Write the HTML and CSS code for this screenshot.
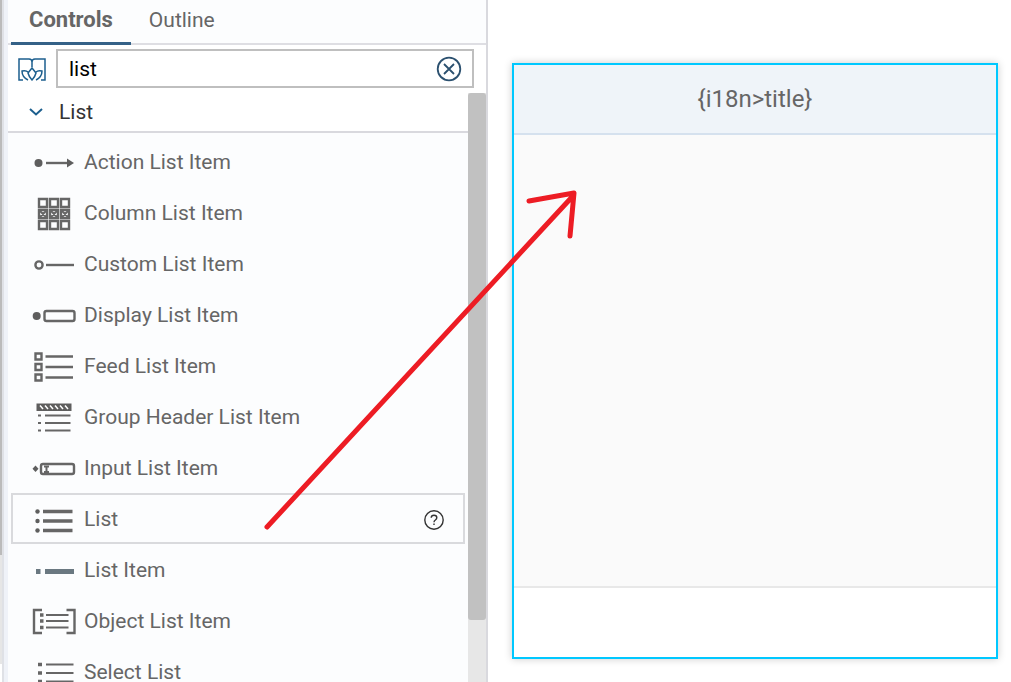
FILE: index.html
```html
<!DOCTYPE html>
<html lang="en">
<head>
    <meta charset="UTF-8">
    <meta name="viewport" content="width=device-width, initial-scale=1.0">
    <title>Layout Editor</title>
    <link rel="stylesheet" href="styles.css">
</head>
<body>
    <div class="gutter">
        <div class="gutter-thumb"></div>
        <div class="gutter-track"></div>
    </div>

    <aside class="panel">
        <nav class="tabs">
            <button class="tab active" type="button">Controls</button>
            <button class="tab" type="button">Outline</button>
        </nav>

        <div class="search">
            <button class="book-btn" type="button" aria-label="Library">
                <svg width="28" height="24" viewBox="0 0 28 24">
                    <path d="M5 23H1V2H11Q14 2 14 5V10M14 5Q14 2 17 2H27V23H23"/>
                    <path d="M14 11L10 16Q11 20 14 23Q17 20 18 16Z"/>
                    <path d="M10 15Q8 13 4 14Q4 20 10 23M18 15Q20 13 24 14Q24 20 18 23"/>
                </svg>
            </button>
            <div class="search-box">
                <input type="text" value="list" aria-label="Search controls">
                <button class="clear-btn" type="button" aria-label="Clear">
                    <svg width="26" height="26" viewBox="0 0 26 26">
                        <circle cx="13" cy="13" r="11.3"/>
                        <path d="M8 8L18 18M18 8L8 18"/>
                    </svg>
                </button>
            </div>
        </div>

        <div class="scroll-area">
            <div class="content">
                <button class="group" type="button">
                    <svg width="14" height="8" viewBox="0 0 14 8"><path d="M1 1L7 6.5L13 1"/></svg>
                    List
                </button>

                <ul class="items">
                    <li class="item">
                        <svg class="icon" viewBox="0 0 46 37">
                            <circle class="fill" cx="7.5" cy="20" r="4"/>
                            <path d="M15 20H37"/>
                            <path class="fill" d="M36 15.5L43 20L36 24.5Z"/>
                        </svg>
                        Action List Item
                    </li>
                    <li class="item">
                        <svg class="icon" viewBox="0 0 46 37">
                            <path d="M8 5H16V13H8ZM19 5H27V13H19ZM30 5H38V13H30ZM8 16H16V24H8ZM19 16H27V24H19ZM30 16H38V24H30ZM8 27H16V35H8ZM19 27H27V35H19ZM30 27H38V35H30Z"/>
                            <path class="medium" d="M9 17L15 23M15 17L9 23M20 17L26 23M26 17L20 23M31 17L37 23M37 17L31 23"/>
                        </svg>
                        Column List Item
                    </li>
                    <li class="item">
                        <svg class="icon" viewBox="0 0 46 37">
                            <circle cx="8" cy="20" r="3.6"/>
                            <path d="M15 20H43"/>
                        </svg>
                        Custom List Item
                    </li>
                    <li class="item">
                        <svg class="icon" viewBox="0 0 46 37">
                            <circle class="fill" cx="5.7" cy="20" r="4"/>
                            <rect x="13.5" y="15" width="30" height="10" rx="2"/>
                        </svg>
                        Display List Item
                    </li>
                    <li class="item">
                        <svg class="icon" viewBox="0 0 46 37">
                            <path d="M4.5 6.5H10.5V12.5H4.5ZM4.5 17H10.5V23H4.5ZM4.5 27.5H10.5V33.5H4.5Z"/>
                            <path d="M14.5 9.5H42M14.5 20H42M14.5 30.5H42"/>
                        </svg>
                        Feed List Item
                    </li>
                    <li class="item">
                        <svg class="icon" viewBox="0 0 46 37">
                            <rect class="fill" x="5.5" y="5.5" width="35" height="7.5"/>
                            <path class="hatch" d="M9 7.5L12 11M14 7.5L17 11M19 7.5L22 11M24 7.5L27 11M29 7.5L32 11M34 7.5L37 11"/>
                            <path class="medium" d="M14 17.5H39.5M14 25H39.5M14 32.5H39.5"/>
                            <path class="medium" d="M7 17.5H10M7 25H10M7 32.5H10"/>
                        </svg>
                        Group Header List Item
                    </li>
                    <li class="item">
                        <svg class="icon" viewBox="0 0 46 37">
                            <path class="fill" d="M1.5 19.7L4.5 16.5L7.5 19.7L4.5 23Z"/>
                            <rect x="10" y="15" width="33" height="10" rx="2"/>
                            <path class="medium" d="M13 17.5H18M15.5 17.5V23M13 23H18"/>
                        </svg>
                        Input List Item
                    </li>
                    <li class="item selected">
                        <svg class="icon" viewBox="0 0 46 37">
                            <path class="thick" d="M12 11.5H41.5M12 21H41.5M12 30.5H41.5"/>
                            <circle class="fill" cx="6.5" cy="11.5" r="2.2"/>
                            <circle class="fill" cx="6.5" cy="21" r="2.2"/>
                            <circle class="fill" cx="6.5" cy="30.5" r="2.2"/>
                        </svg>
                        List
                        <button class="help-btn" type="button" aria-label="Help">
                            <svg width="22" height="22" viewBox="0 0 22 22">
                                <circle cx="11" cy="12" r="9.2"/>
                                <path d="M8.2 9.8Q8.3 7.3 11 7.3Q13.8 7.3 13.8 9.8Q13.8 11 12.4 12Q11 13 11 14.2M11 15.6V17"/>
                            </svg>
                        </button>
                    </li>
                    <li class="item">
                        <svg class="icon" viewBox="0 0 46 37">
                            <path class="slate" d="M5 20.5H9.5M14 20.5H43"/>
                        </svg>
                        List Item
                    </li>
                    <li class="item">
                        <svg class="icon" viewBox="0 0 46 37">
                            <path d="M11 8H3V31H11M35.5 8H43.5V31H35.5"/>
                            <path class="medium" d="M15 13H37.5M15 19H37.5M15 25.5H37.5"/>
                            <path class="thick" d="M9 13H12.5M9 19H12.5M9 25.5H12.5"/>
                        </svg>
                        Object List Item
                    </li>
                    <li class="item">
                        <svg class="icon" viewBox="0 0 46 37">
                            <path class="medium" d="M15 11.5H42.5M15 20H42.5M15 28.5H42.5"/>
                            <path class="thick" d="M7 11.5H11M7 20H11M7 28.5H11"/>
                        </svg>
                        Select List
                    </li>
                </ul>
            </div>
            <div class="scrollbar"><div class="thumb"></div></div>
        </div>
    </aside>

    <main class="canvas">
        <section class="view">
            <header class="view-header">{i18n&gt;title}</header>
            <div class="view-body"></div>
            <footer class="view-footer"></footer>
        </section>
    </main>

    <!-- drag hint: from the List control to the view -->
    <svg class="arrow" width="330" height="350" viewBox="0 0 330 350">
        <path d="M7 342L312 12M269 16L314 8L310 51"/>
    </svg>
</body>
</html>
```

FILE: styles.css
```css
* {
    box-sizing: border-box;
}
body {
    display: flex;
    height: 100vh;
    margin: 0;
    overflow: hidden;
    background-color: #fff;
    color: #666;
    font-family: Roboto, "Noto Sans", sans-serif;
    font-size: 21px;
}
button, input {
    font: inherit;
    color: inherit;
    border: none;
    background: none;
    padding: 0;
    margin: 0;
}
button {
    cursor: pointer;
}
svg {
    display: block;
    flex: none;
    fill: none;
}

/* left edge */
.gutter {
    display: flex;
    flex-direction: column;
    flex: none;
    width: 8px;
    background-color: #eff2f8;
    border-left: 2px solid #fff;
    box-shadow: inset 2px 0 #dfe1e6;
}
.gutter-thumb, .gutter-track {
    width: 2px;
    margin-left: -2px;
    background-color: #bbb;
    flex: 555;
}
.gutter-track {
    background-color: #e6e6e6;
    flex: 109;
    margin-bottom: 18px;
}

/* controls panel */
.panel {
    display: flex;
    flex-direction: column;
    flex: none;
    width: 480px;
    border-right: 2px solid #d9d9de;
}
.tabs {
    display: flex;
    flex: none;
    height: 45px;
    padding-left: 3px;
    background-color: #fcfdfe;
    border-bottom: 2px solid #dedee3;
}
.tab {
    height: 45px;
    padding: 0 18px 3px;
    border-bottom: 3px solid transparent;
}
.tab.active {
    font-size: 22px;
    font-weight: bold;
    border-bottom-color: #346187;
}
.search {
    display: flex;
    align-items: center;
    flex: none;
    gap: 10px;
    padding: 4px 12px 5px 10px;
}
.book-btn svg {
    stroke: #1c5f8e;
    stroke-width: 1.5;
}
.search-box {
    display: flex;
    align-items: center;
    flex: 1;
    height: 39px;
    padding: 0 10px 0 11px;
    border: 2px solid #bfbfbf;
}
.search-box input {
    flex: 1;
    min-width: 0;
    color: #000;
    outline: none;
}
.clear-btn svg {
    stroke: #2b506f;
    stroke-width: 1.8;
}
.scroll-area {
    display: flex;
    flex: 1;
    min-height: 0;
}
.content {
    flex: 1;
    overflow: hidden;
    background-color: #fcfdfe;
}
.group {
    display: flex;
    align-items: center;
    gap: 16px;
    width: 100%;
    height: 40px;
    padding-left: 21px;
    background-color: #fff;
    border-bottom: 2px solid #d9d9de;
    color: #333;
}
.group svg {
    stroke: #1c5f8e;
    stroke-width: 2;
}
.items {
    list-style: none;
    margin: 0;
    padding: 3px;
}
.item {
    display: flex;
    align-items: center;
    gap: 7px;
    height: 51px;
    padding: 0 18px;
    border: 2px solid transparent;
}
.item.selected {
    border-color: #d9dadd;
}
.icon {
    width: 46px;
    height: 37px;
    stroke: #666;
    stroke-width: 2.4;
}
.icon .fill {
    fill: #5e5e5e;
    stroke: none;
}
.icon .medium {
    stroke-width: 2;
}
.icon .thick {
    stroke-width: 3.6;
}
.icon .slate {
    stroke: #6a7881;
    stroke-width: 5;
}
.icon .hatch {
    stroke: #fff;
    stroke-width: 1.5;
}
.help-btn {
    margin-left: auto;
}
.help-btn svg {
    stroke: #333;
    stroke-width: 1.4;
}
.scrollbar {
    width: 18px;
    background-color: #e7e7e7;
}
.thumb {
    height: 89.5%;
    background-color: #c1c1c1;
    border-radius: 3px;
}

/* design canvas */
.canvas {
    display: flex;
    flex: 1;
    padding: 63px 13px 23px 24px;
}
.view {
    display: flex;
    flex-direction: column;
    flex: 1;
    border: 2px solid #00c8ff;
    box-shadow: 0 0 8px rgba(0, 0, 0, 0.2);
}
.view-header {
    height: 70px;
    background-color: #eff4f9;
    border-bottom: 2px solid #d5e1ee;
    font-size: 24px;
    line-height: 68px;
    text-align: center;
}
.view-body {
    flex: 1;
    background-color: #fafafa;
    border-bottom: 2px solid #e8e8e8;
}
.view-footer {
    height: 69px;
}

.arrow {
    position: absolute;
    left: 260px;
    top: 185px;
    stroke: #ed1c24;
    stroke-width: 5;
    stroke-linecap: round;
    stroke-linejoin: round;
    pointer-events: none;
}
```
